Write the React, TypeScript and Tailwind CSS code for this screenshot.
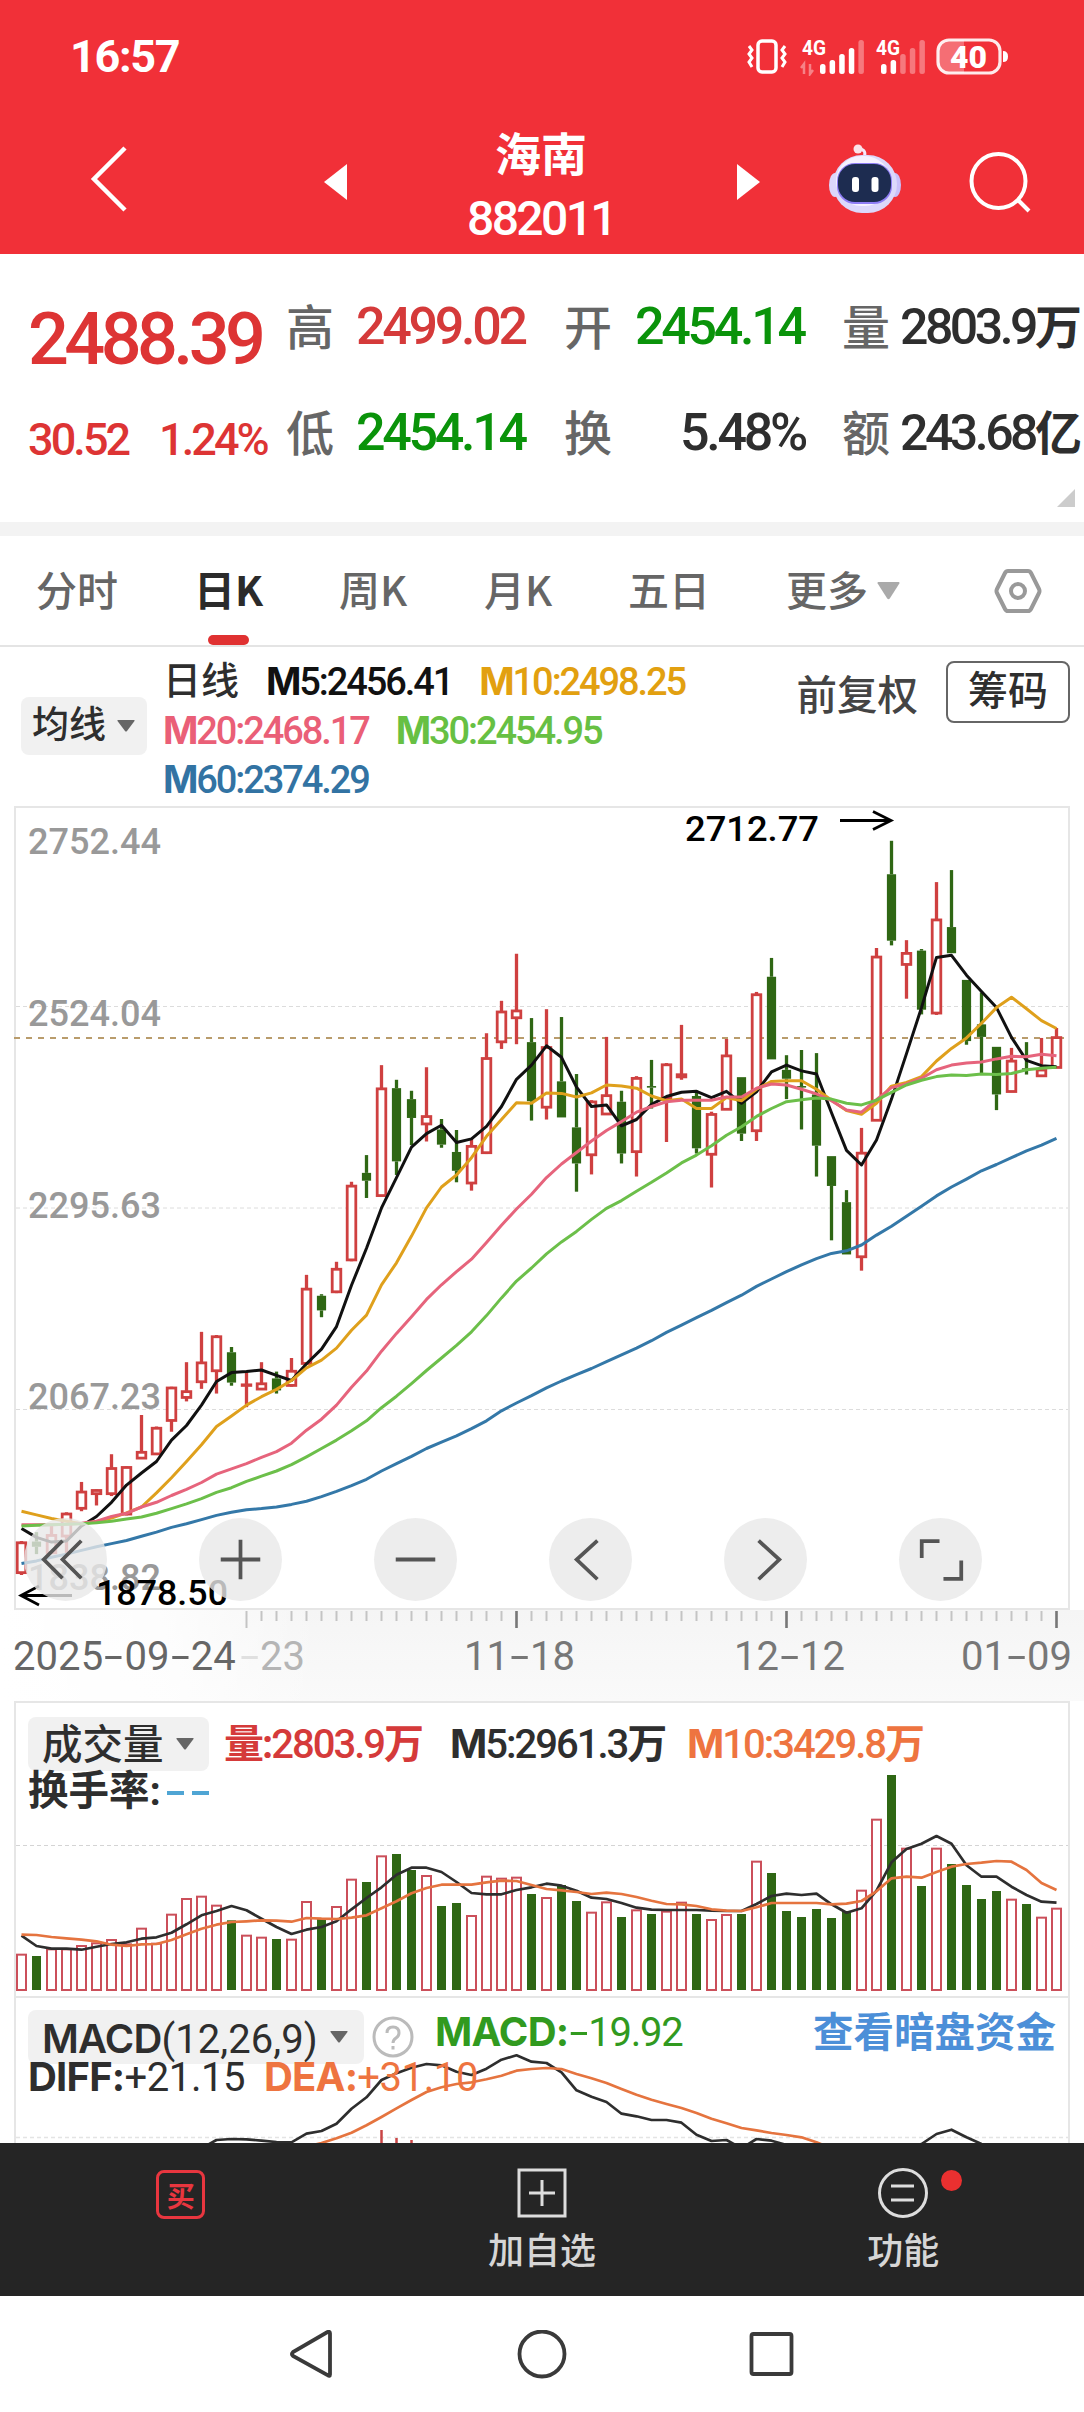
import React from 'react';

type Candle = [string, number, number, number, number];

// Chart rows are stored in a 1568-step grid that covers 820px of height
const UNIT = 820 / 1568;
const PRICE_TOP = 806;
const STEP = 15;
const FIRST_X = 21.5;

const cx = (i: number) => FIRST_X + i * STEP;
const priceY = (v: number) => 800 + v * UNIT - PRICE_TOP;
const volumeY = (v: number) => v / 3 - 1;
const macdY = (v: number) => v / 3 - 296;

// [direction, high, body top, body bottom, low]
const candles: Candle[] = [
    ['r', 1417, 1419, 1478, 1482], ['g', 1400, 1418, 1428, 1442], ['r', 1385, 1405, 1440, 1440], ['r', 1362, 1364, 1408, 1440],
    ['r', 1304, 1322, 1355, 1360], ['r', 1318, 1319, 1327, 1349], ['r', 1251, 1277, 1327, 1331], ['r', 1274, 1275, 1366, 1368],
    ['r', 1176, 1246, 1259, 1259], ['r', 1198, 1200, 1251, 1251], ['r', 1122, 1123, 1187, 1208], ['r', 1075, 1130, 1143, 1150],
    ['r', 1017, 1075, 1113, 1126], ['r', 1023, 1025, 1092, 1135], ['g', 1046, 1056, 1114, 1120], ['r', 1093, 1117, 1120, 1161],
    ['r', 1075, 1115, 1127, 1127], ['g', 1093, 1106, 1129, 1135], ['r', 1067, 1091, 1120, 1122], ['r', 908, 934, 1078, 1078],
    ['g', 945, 948, 976, 989], ['r', 883, 896, 941, 943], ['r', 730, 737, 880, 882], ['g', 679, 713, 728, 761],
    ['r', 507, 551, 757, 757], ['g', 535, 551, 691, 717], ['g', 556, 572, 608, 660], ['r', 511, 604, 620, 653],
    ['g', 610, 630, 659, 665], ['g', 631, 673, 709, 731], ['r', 648, 661, 733, 747], ['r', 446, 493, 675, 677],
    ['r', 384, 404, 463, 476], ['r', 294, 402, 417, 467], ['g', 417, 463, 576, 613], ['r', 400, 472, 588, 611],
    ['g', 415, 538, 607, 607], ['g', 524, 626, 695, 749], ['r', 574, 576, 679, 716], ['r', 453, 564, 601, 601],
    ['g', 556, 577, 676, 695], ['r', 528, 531, 673, 720], ['g', 497, 547, 550, 590], ['r', 503, 505, 571, 654],
    ['r', 430, 524, 530, 535], ['g', 555, 566, 666, 676], ['r', 596, 600, 678, 741], ['r', 457, 488, 592, 592],
    ['g', 530, 530, 638, 652], ['r', 367, 371, 633, 652], ['g', 302, 338, 496, 496], ['g', 488, 516, 533, 572],
    ['g', 478, 547, 549, 630], ['g', 484, 563, 661, 720], ['g', 681, 681, 738, 842], ['g', 746, 769, 869, 869],
    ['r', 627, 674, 874, 900], ['r', 283, 299, 613, 613], ['g', 78, 142, 269, 278], ['r', 268, 292, 315, 380],
    ['g', 285, 288, 401, 410], ['r', 157, 228, 408, 411], ['g', 134, 243, 293, 293], ['g', 344, 344, 461, 468],
    ['g', 368, 429, 453, 525], ['g', 472, 472, 563, 593], ['r', 474, 498, 558, 558], ['g', 463, 513, 515, 525],
    ['r', 455, 515, 528, 528], ['r', 436, 453, 512, 512],
];

const ma5 = [1393, 1410, 1419, 1417, 1388, 1370, 1343, 1310, 1287, 1265, 1224, 1196, 1157, 1112, 1095, 1093, 1090, 1100, 1110, 1078, 1050, 1007, 928, 857, 780, 722, 664, 638, 622, 655, 648, 624, 586, 534, 507, 470, 492, 549, 586, 583, 623, 611, 582, 567, 559, 557, 569, 557, 580, 558, 520, 507, 518, 524, 598, 670, 698, 650, 572, 485, 397, 301, 297, 335, 366, 397, 454, 498, 508, 510];
const ma10 = [1360, 1367, 1374, 1379, 1384, 1380, 1373, 1363, 1352, 1325, 1296, 1265, 1233, 1198, 1178, 1157, 1141, 1127, 1110, 1086, 1071, 1048, 1014, 985, 927, 885, 834, 780, 740, 717, 684, 643, 611, 579, 580, 560, 561, 568, 560, 545, 547, 551, 566, 575, 572, 590, 590, 569, 575, 553, 538, 537, 537, 553, 574, 594, 601, 580, 547, 540, 529, 499, 475, 455, 427, 397, 377, 399, 422, 437];
const ma20 = [1386, 1386, 1386, 1385, 1383, 1379, 1370, 1364, 1352, 1343, 1330, 1318, 1305, 1289, 1279, 1269, 1257, 1246, 1230, 1205, 1184, 1157, 1123, 1092, 1054, 1020, 988, 955, 927, 902, 878, 846, 813, 782, 754, 722, 696, 674, 652, 632, 615, 597, 586, 577, 574, 574, 574, 568, 568, 551, 543, 545, 553, 562, 575, 593, 597, 573, 550, 543, 532, 516, 507, 503, 501, 495, 490, 491, 486, 489];
const ma30 = [1388, 1387, 1386, 1385, 1384, 1382, 1379, 1375, 1371, 1364, 1355, 1346, 1336, 1324, 1315, 1303, 1293, 1283, 1271, 1256, 1240, 1224, 1206, 1187, 1162, 1140, 1116, 1091, 1067, 1043, 1017, 986, 952, 920, 895, 868, 845, 825, 802, 781, 766, 748, 731, 713, 694, 679, 661, 641, 625, 605, 590, 577, 573, 570, 572, 580, 583, 574, 559, 545, 536, 529, 526, 527, 524, 525, 523, 516, 513, 511];
const ma60 = [1460, 1455, 1448, 1442, 1435, 1428, 1422, 1416, 1408, 1400, 1391, 1384, 1376, 1368, 1362, 1357, 1355, 1352, 1347, 1341, 1332, 1322, 1311, 1299, 1283, 1269, 1255, 1240, 1228, 1216, 1202, 1187, 1168, 1153, 1139, 1124, 1111, 1099, 1087, 1074, 1061, 1048, 1034, 1018, 1004, 990, 976, 961, 947, 930, 916, 902, 889, 877, 867, 862, 851, 832, 815, 796, 777, 757, 740, 725, 709, 697, 684, 671, 660, 647];

const volumes = [761, 768, 745, 745, 735, 727, 717, 730, 683, 728, 641, 594, 587, 614, 661, 704, 710, 717, 716, 603, 655, 618, 536, 546, 466, 462, 510, 525, 618, 609, 645, 527, 533, 530, 582, 591, 555, 603, 635, 604, 651, 628, 642, 632, 605, 642, 657, 642, 642, 482, 519, 633, 651, 627, 654, 633, 569, 356, 225, 443, 558, 443, 492, 555, 597, 573, 596, 612, 650, 623];
const volDirections = 'rgrrrrrrrrrrrrgrrgrrgrrgrggrggrrrrgrggrrgrgrrgrrgrggggggrrgrgrggggrgrr';
const volMa5 = [707, 738, 746, 746, 749, 740, 732, 727, 716, 712, 698, 673, 646, 633, 618, 631, 656, 681, 702, 689, 681, 664, 628, 594, 562, 524, 503, 503, 516, 546, 579, 583, 583, 570, 562, 551, 557, 572, 593, 597, 609, 623, 629, 630, 630, 630, 632, 633, 633, 612, 588, 581, 585, 581, 613, 638, 625, 572, 487, 447, 431, 408, 431, 496, 530, 530, 560, 585, 605, 608];
const volMa10 = [704, 705, 711, 715, 719, 724, 734, 738, 733, 732, 720, 703, 686, 674, 666, 664, 661, 662, 665, 654, 656, 657, 653, 646, 625, 604, 580, 564, 554, 554, 554, 547, 542, 543, 555, 567, 571, 576, 582, 578, 582, 591, 602, 612, 613, 618, 628, 632, 633, 622, 609, 609, 609, 609, 613, 611, 603, 574, 535, 530, 533, 516, 500, 492, 488, 483, 485, 510, 549, 570];

const diff = [1345, 1320, 1317, 1318, 1322, 1326, 1327, 1301, 1293, 1271, 1226, 1192, 1140, 1120, 1103, 1092, 1096, 1115, 1125, 1106, 1079, 1066, 1085, 1089, 1117, 1171, 1190, 1206, 1241, 1249, 1260, 1260, 1268, 1304, 1323, 1320, 1345, 1317, 1322, 1335, 1360, 1370, 1370, 1370, 1370, 1370, 1365, 1350, 1332, 1302, 1289, 1312, 1332, 1350];
const dea = [1340, 1329, 1315, 1298, 1276, 1251, 1225, 1200, 1176, 1162, 1152, 1147, 1138, 1127, 1112, 1107, 1104, 1107, 1122, 1135, 1149, 1167, 1184, 1199, 1212, 1224, 1239, 1256, 1270, 1284, 1291, 1299, 1305, 1312, 1327, 1345];

const toPoints = (values: number[], y: (v: number) => number, start = 0) =>
    values.map((v, i) => `${cx(i + start)},${y(v).toFixed(1)}`).join(' ');

const Line: React.FC<{ points: string; color: string; width?: number }> = ({ points, color, width = 3 }) => (
    <polyline points={points} fill="none" stroke={color} strokeWidth={width} strokeLinejoin="round" />
);

const Caret: React.FC<{ className?: string }> = ({ className }) => (
    <svg viewBox="0 0 18 12" preserveAspectRatio="none" className={className ?? 'w-[18px] h-3'}>
        <path d="M1 0h16q1 0 .5 1L10 11q-1 1-2 0L.5 1Q0 0 1 0z" fill="currentColor" />
    </svg>
);

const Dash = () => <span className="mx-[5px] inline-block scale-x-[1.7]">-</span>;

const SignalBars: React.FC<{ active: number; arrows?: boolean }> = ({ active, arrows }) => (
    <svg width="66" height="40" viewBox="0 -4 66 40" fill="#fff">
        <text x="2" y="15" fontSize="21" fontWeight="700" fontFamily="Roboto, sans-serif" textLength="24" lengthAdjust="spacingAndGlyphs">4G</text>
        {arrows && <path d="M4 34V24l-3 4M10 24v10l3-4" fill="none" stroke="#fff" strokeOpacity=".4" strokeWidth="2.5" />}
        {[24, 20, 14, 8, 0].map((top, i) => (
            <rect key={i} x={(arrows ? 20 : 7) + i * 9.6} y={top} width="5.500" height={34 - top} rx="2.5" opacity={i < active ? 1 : 0.35} />
        ))}
    </svg>
);

const StatusBar = () => (
    <div className="flex h-[112px] items-start justify-between pl-[70px] pr-[74px] pt-[35px]">
        <span className="font-['Roboto'] text-[45px] font-bold leading-[44px] tracking-[-0.03em]">16:57</span>
        <div className="flex items-center pt-[1px]">
            <svg width="42" height="36" viewBox="0 0 42 36" fill="none" stroke="#fff" strokeWidth="3.500">
                <rect x="12" y="3" width="18" height="31" rx="4" />
                <path d="M3 8l3 4-3 4 3 4-3 4 3 5M39 8l-3 4 3 4-3 4 3 4-3 5" strokeWidth="3" />
            </svg>
            <div className="ml-3"><SignalBars active={4} arrows /></div>
            <div className="ml-2"><SignalBars active={2} /></div>
            <svg className="-ml-1" width="74" height="37" viewBox="0 0 74 37">
                <path d="M12 2h16v33H12Q2 35 2 25V12Q2 2 12 2z" fill="#fff" fillOpacity=".3" />
                <rect x="2" y="2" width="62" height="33" rx="11" fill="none" stroke="#fff" strokeOpacity=".9" strokeWidth="3.200" />
                <path d="M67 13q5 0 5 5.500t-5 5.500z" fill="#fff" />
                <text x="14" y="29.500" fontSize="31" fontWeight="900" fontFamily="Roboto, sans-serif" fill="#fff" textLength="37" lengthAdjust="spacingAndGlyphs">40</text>
            </svg>
        </div>
    </div>
);

const Robot = () => (
    <svg width="76" height="72" viewBox="0 0 76 72">
        <path d="M37 15q3-8-4-9" fill="none" stroke="#f5e9fb" strokeWidth="3" />
        <circle cx="31" cy="6" r="4.500" fill="#fbe3ea" />
        <ellipse cx="8" cy="42" rx="6" ry="12" fill="#dcd6fb" />
        <ellipse cx="68" cy="42" rx="6" ry="12" fill="#c9c0fa" />
        <rect x="6" y="12" width="64" height="58" rx="29" fill="#dcd8fb" />
        <rect x="9" y="13" width="54" height="50" rx="25" fill="#f6f2ff" />
        <rect x="10" y="20" width="55" height="41" rx="18" fill="#8e7df5" />
        <rect x="11" y="21" width="53" height="38" rx="17" fill="#1d2c50" />
        <rect x="25" y="34" width="7" height="15" rx="3" fill="#fff" />
        <rect x="44.500" y="34" width="7" height="15" rx="3" fill="#fff" />
    </svg>
);

const Header = () => (
    <header className="h-[254px] bg-[#f13038] text-white">
        <StatusBar />
        <div className="flex items-start">
            <svg className="ml-[88px] mt-[32px]" width="44" height="72" viewBox="0 0 44 72">
                <path d="M37 4L6 35l31 31" fill="none" stroke="#fff" strokeWidth="4.500" />
            </svg>
            <svg className="ml-[191px] mt-[51px]" width="25" height="38" viewBox="0 0 25 38"><path d="M24 1v36L1 19z" fill="#fff" /></svg>
            <div className="w-[386px] text-center">
                <h1 className="mt-[16px] font-['Noto_Sans_CJK_SC'] text-[46px] font-bold leading-[46px]">海南</h1>
                <div className="mt-[22px] font-['Roboto'] text-[48px] font-medium leading-[46px] tracking-[-0.055em]">882011</div>
            </div>
            <svg className="ml-[2px] mt-[51px]" width="25" height="38" viewBox="0 0 25 38"><path d="M1 1v36l23-18z" fill="#fff" /></svg>
            <div className="ml-[66px] mt-[31px]"><Robot /></div>
            <svg className="ml-[64px] mt-[36px]" width="64" height="66" viewBox="0 0 64 66" fill="none" stroke="#fff" strokeWidth="4">
                <circle cx="31.500" cy="33" r="27" />
                <path d="M51 52l11 11" />
            </svg>
        </div>
    </header>
);

const StatLabel: React.FC<{ children: string }> = ({ children }) => (
    <span className="-mt-[3px] -ml-[1px] font-['Noto_Sans_CJK_SC'] text-[48px] font-medium leading-[54px] tracking-normal text-[#666]">{children}</span>
);

const Quote = () => (
    <section className="relative h-[268px] bg-white font-['Roboto','Noto_Sans_CJK_SC']">
        <div className="flex pt-[46px]">
            <div className="w-[287px] shrink-0 pl-7 text-[#dd3434]">
                <div className="mt-1 text-[72px] font-medium leading-[72px] tracking-[-0.064em]">2488.39</div>
                <div className="mt-[37px] flex text-[45px] font-medium leading-[54px] tracking-[-0.065em]">
                    <span className="w-[131px]">30.52</span>
                    <span>1.24%</span>
                </div>
            </div>
            <div className="grid grid-cols-[69px_170px_39px_70px_170px_38px_57px_200px] content-start gap-y-[51px] whitespace-nowrap text-[52px] font-medium leading-[54px] tracking-[-0.063em]">
                <StatLabel>高</StatLabel>
                <span className="text-[#d53a3a]">2499.02</span>
                <span />
                <StatLabel>开</StatLabel>
                <span className="text-[#0a930a]">2454.14</span>
                <span />
                <StatLabel>量</StatLabel>
                <span className="text-[50px] tracking-[-0.07em] text-[#2e2e2e]">2803.9<b className="text-[47px] font-bold">万</b></span>
                <StatLabel>低</StatLabel>
                <span className="text-[#0a930a]">2454.14</span>
                <span />
                <StatLabel>换</StatLabel>
                <span className="text-right text-[#2e2e2e]">5.48%</span>
                <span />
                <StatLabel>额</StatLabel>
                <span className="text-[50px] tracking-[-0.07em] text-[#2e2e2e]">243.68<b className="text-[47px] font-bold">亿</b></span>
            </div>
        </div>
        <svg className="absolute bottom-[15px] right-[9px]" width="18" height="18" viewBox="0 0 18 18"><path d="M18 0v18H0z" fill="#ccc" /></svg>
    </section>
);

const Tabs = () => (
    <nav className="flex h-[111px] items-center border-b-2 border-[#e4e4e4] bg-white pl-[36px] font-['Noto_Sans_CJK_SC'] text-[41px] font-medium text-[#666]">
        <span className="-mt-[3px] w-[158px]">分时</span>
        <span className="relative flex h-full w-[145px] items-center pb-[3px] font-bold text-[#2b2b2b]">
            日K
            <span className="absolute bottom-0 left-[14px] h-[10px] w-[41px] rounded-md bg-[#e03131]" />
        </span>
        <span className="-mt-[3px] w-[145px]">周K</span>
        <span className="-mt-[3px] w-[144px]">月K</span>
        <span className="-mt-[3px] w-[158px]">五日</span>
        <span className="-mt-[3px]">更多</span>
        <Caret className="ml-[9px] h-[18px] w-[23px] text-[#aaa]" />
        <svg className="ml-auto mr-[42px]" width="48" height="46" viewBox="0 0 48 46" fill="none" stroke="#999" strokeWidth="4">
            <path d="M14 3h20q2 0 3 2l8 16q1 2 0 4l-8 16q-1 2-3 2H14q-2 0-3-2L3 25q-1-2 0-4L11 5q1-2 3-2z" />
            <circle cx="24" cy="23" r="7" />
        </svg>
    </nav>
);

const MaValue: React.FC<{ name: string; value: string; className: string }> = ({ name, value, className }) => (
    <span className={className}><b className="font-['Inter'] font-bold">M</b>{name}:{value}</span>
);

const MaLegend = () => (
    <section className="flex h-[159px] bg-white font-['Roboto','Noto_Sans_CJK_SC']">
        <div className="ml-[21px] mt-[50px] flex h-[58px] w-[126px] items-center justify-between rounded-lg bg-[#f1f1f1] pl-[11px] pr-3 text-[#2e2e2e]">
            <span className="text-[37px] font-medium">均线</span>
            <Caret className="h-3 w-[18px] text-[#666]" />
        </div>
        <div className="ml-[16px] mt-[10px] w-[600px] text-[38px] font-medium leading-[48px] tracking-[-0.055em]">
            <div className="flex gap-[27px]">
                <span className="font-medium tracking-normal text-[#2e2e2e]">日线</span>
                <MaValue name="5" value="2456.41" className="text-[#111]" />
                <MaValue name="10" value="2498.25" className="text-[#e2a010]" />
            </div>
            <div className="flex gap-[27px]">
                <MaValue name="20" value="2468.17" className="text-[#ea5f77]" />
                <MaValue name="30" value="2454.95" className="text-[#67c043]" />
            </div>
            <MaValue name="60" value="2374.29" className="text-[#3273a3]" />
        </div>
        <span className="ml-auto mr-7 mt-[19px] text-[40.5px] font-medium leading-[60px] text-[#444]">前复权</span>
        <span className="mr-[14px] mt-[14px] flex h-[62px] w-[124px] items-center justify-center rounded-lg border-2 border-[#666] text-[40px] font-medium text-[#2e2e2e]">筹码</span>
    </section>
);

const axisLabels = [
    { text: '2752.44', y: 47.5 },
    { text: '2524.04', y: 220 },
    { text: '2295.63', y: 412 },
    { text: '2067.23', y: 603 },
    { text: '1838.82', y: 784 },
];

const buttonIcons = [
    'M39 23L20 42l19 19M58 23L39 42l19 19',
    'M22 42h40M42 22v40',
    'M22 42h40',
    'M49 23L28 42l21 20',
    'M35 23l21 19-21 20',
    'M41 23.500H23v17M63 43v18.500H45',
];

const PriceChart = () => (
    <section className="relative h-[804px] bg-white">
        <svg width="1084" height="804" viewBox="0 0 1084 804" className="block">
            <rect x="15" y="1" width="1054" height="802" fill="none" stroke="#e6e6e6" strokeWidth="2" />
            {[200.5, 402, 603.5].map((y) => (
                <line key={y} x1="16" x2="1068" y1={y} y2={y} stroke="#dcdcdc" strokeWidth="1" strokeDasharray="4 3" />
            ))}
            <line x1="14" x2="1068" y1="232" y2="232" stroke="#b99c6c" strokeWidth="1.800" strokeDasharray="6 6" />
            {axisLabels.map((l) => (
                <text key={l.text} x="28" y={l.y} fontSize="37" fontWeight="500" fontFamily="Roboto, sans-serif" fill="#999" textLength="133" lengthAdjust="spacingAndGlyphs">{l.text}</text>
            ))}
            {candles.map(([dir, high, top, bottom, low], i) => {
                const red = dir === 'r';
                const y = priceY(top);
                const h = Math.max(priceY(bottom) - y, 1.5);
                return (
                    <g key={i} stroke={red ? '#cf4040' : '#2f6714'} strokeWidth="3.300">
                        <line x1={cx(i)} x2={cx(i)} y1={priceY(high)} y2={y} />
                        <line x1={cx(i)} x2={cx(i)} y1={y + h} y2={priceY(low)} />
                        {red
                            ? <rect x={cx(i) - 4.3} y={y + 0.7} width="8.600" height={Math.max(h - 1, 0.5)} fill="#fff" strokeWidth="2.800" />
                            : <rect x={cx(i) - 4.6} y={y} width="9.200" height={h} fill="#2f6714" stroke="none" />}
                    </g>
                );
            })}
            <Line points={toPoints(ma60, priceY)} color="#3478a8" />
            <Line points={toPoints(ma5, priceY)} color="#111" />
            <Line points={toPoints(ma10, priceY)} color="#dfa01c" />
            <Line points={toPoints(ma20, priceY)} color="#e6647c" />
            <Line points={toPoints(ma30, priceY)} color="#6cbf4a" />
            <g fill="none" stroke="#000" strokeWidth="2.800">
                <path d="M840 14.500h51M873 5.500l18 9-18 9" />
                <path d="M72 789.500H21M39 780l-18 9.500 18 9.500" />
            </g>
            <g fontSize="35.500" fontWeight="500" fontFamily="Roboto, sans-serif" fill="#000">
                <text x="685" y="35" textLength="134" lengthAdjust="spacingAndGlyphs">2712.77</text>
                <text x="96" y="799" textLength="132" lengthAdjust="spacingAndGlyphs">1878.50</text>
            </g>
        </svg>
        <div className="absolute bottom-[9px] left-[24px] flex gap-[92px]">
            {buttonIcons.map((d) => (
                <button key={d} className="h-[83px] w-[83px] rounded-full bg-[#e8e8e8]/80">
                    <svg width="83" height="83" viewBox="0 0 84 84" fill="none" stroke="#555" strokeWidth="3.800"><path d={d} /></svg>
                </button>
            ))}
        </div>
    </section>
);

const TimeAxis = () => (
    <div className="relative h-[91px] bg-gradient-to-b from-[#f5f5f5] to-[#fafafa] font-['Roboto'] text-[40px] text-[#777]">
        <div className="absolute left-0 top-0 h-full w-[320px] bg-gradient-to-r from-white via-white/80 to-transparent" />
        <svg className="relative block" width="1084" height="20" viewBox="0 0 1084 20">
            {candles.map((_, i) => i >= 15 && (
                <line key={i} x1={cx(i)} x2={cx(i)} y1="1" y2={(i - 15) % 18 === 0 ? 18 : 11} stroke={i > 15 && (i - 15) % 18 === 0 ? '#777' : '#c4c4c4'} strokeWidth={i > 15 && (i - 15) % 18 === 0 ? 2.6 : 2} />
            ))}
        </svg>
        <div className="relative flex items-center whitespace-nowrap pl-[13px] pt-[4px] leading-[46px]">
            <span className="w-[226px] tracking-[0.002em] text-[#666]">2025<Dash />09<Dash />24</span>
            <span className="w-[225px] text-[#b5b5b5]"><span className="text-[#e0e0e0]"><Dash /></span>23</span>
            <span className="w-[270px]">11<Dash />18</span>
            <span className="w-[227px]">12<Dash />12</span>
            <span>01<Dash />09</span>
        </div>
    </div>
);

const VolumeChart = () => (
    <section className="relative h-[295px] bg-white font-['Roboto','Noto_Sans_CJK_SC']">
        <svg width="1084" height="295" viewBox="0 0 1084 295" className="block">
            <rect x="15" y="1" width="1054" height="300" fill="none" stroke="#e6e6e6" strokeWidth="2" />
            <line x1="16" x2="1068" y1="144.500" y2="144.500" stroke="#d4d4d4" strokeWidth="1" strokeDasharray="4 3" />
            {volumes.map((v, i) => volDirections[i] === 'r'
                ? <rect key={i} x={cx(i) - 4.5} y={volumeY(v) + 1} width="9" height={288 - volumeY(v)} fill="#fff" stroke="#cb4f5a" strokeWidth="2" />
                : <rect key={i} x={cx(i) - 4.5} y={volumeY(v)} width="9" height={289 - volumeY(v)} fill="#2f6714" />)}
            <Line points={toPoints(volMa5, volumeY)} color="#2e2e2e" width={2.7} />
            <Line points={toPoints(volMa10, volumeY)} color="#e5743f" width={2.7} />
        </svg>
        <div className="absolute left-[28px] top-[14px]">
            <div className="flex items-center whitespace-nowrap text-[40px] leading-[54px] font-medium tracking-[-0.05em]">
                <div className="flex h-[54px] w-[181px] items-center gap-3 rounded-lg bg-[#f1f1f1] pl-[14px] text-[#2e2e2e]">
                    <span className="pt-[2px] text-[40.5px] font-medium tracking-normal">成交量</span>
                    <Caret className="h-3 w-[18px] text-[#666]" />
                </div>
                <span className="ml-[15px] w-[226px] pt-[2px] text-[#d53a3a]"><b className="font-bold">量:</b>2803.9<b className="font-bold">万</b></span>
                <span className="w-[237px] pt-[2px] text-[#2e2e2e]"><b className="font-['Inter'] font-bold">M</b>5:2961.3<b className="font-bold">万</b></span>
                <span className="pt-[2px] text-[#ee7440]"><b className="font-['Inter'] font-bold">M</b>10:3429.8<b className="font-bold">万</b></span>
            </div>
            <div className="flex items-center pt-[1px] text-[40.5px] font-bold leading-[36px] text-[#2e2e2e]">
                换手率:
                <span className="ml-[6px] mt-1 h-[4px] w-[17px] bg-[#4fa5d4]" />
                <span className="ml-[8px] mt-1 h-[4px] w-[17px] bg-[#4fa5d4]" />
            </div>
        </div>
    </section>
);

const MacdChart = () => (
    <section className="relative h-[147px] overflow-hidden bg-white font-['Roboto','Noto_Sans_CJK_SC']">
        <div className="absolute left-[28px] top-[14px] h-[54px] w-[336px] rounded-lg bg-[#f1f1f1]" />
        <svg width="1084" height="147" viewBox="0 0 1084 147" className="relative block">
            <rect x="15" y="1" width="1054" height="200" fill="none" stroke="#e6e6e6" strokeWidth="2" />
            <line x1="16" x2="1068" y1="141.500" y2="141.500" stroke="#e4e4e4" strokeWidth="1.500" strokeDasharray="4 3" />
            <path d={`M${cx(24)} 134v20M${cx(25)} 142v20M${cx(26)} 144v20`} stroke="#c94444" strokeWidth="2.500" />
            <Line points={toPoints(diff, macdY, 12)} color="#2e2e2e" width={2.7} />
            <Line points={toPoints(dea, macdY, 19)} color="#e5743f" width={2.7} />
        </svg>
        <div className="absolute inset-x-0 top-[14px] flex whitespace-nowrap pl-[42px] pr-[28px] text-[40px] leading-[54px] text-[#2e2e2e]">
            <span className="w-[288px] pt-[2px] tracking-[0.001em]"><b className="font-['Inter'] font-semibold tracking-[-0.02em]">MACD</b>(12,26,9)</span>
            <Caret className="mt-[21px] h-3 w-[18px] text-[#666]" />
            <svg className="ml-[24px] mt-[6px]" width="42" height="42" viewBox="0 0 42 42" fill="none" stroke="#bbb" strokeWidth="3">
                <circle cx="21" cy="21" r="19" />
                <path d="M15 17q0-6 6-6t6 6q0 3-3 5t-3 5M21 30v3.500" />
            </svg>
            <span className="ml-[21px] -mt-[5px] tracking-[-0.03em] text-[#319a1f]"><b className="font-['Inter'] font-bold tracking-[-0.02em]">MACD:</b><Dash />19.92</span>
            <a className="ml-auto -mt-[4px] text-[40.5px] font-bold text-[#4c8fd8]">查看暗盘资金</a>
        </div>
        <div className="absolute left-[28px] top-[59px] flex whitespace-nowrap text-[40px] leading-[44px] tracking-[-0.01em]">
            <span className="w-[236px] text-[#2e2e2e]"><b className="font-['Inter'] font-bold tracking-[-0.02em]">DIFF:</b>+21.15</span>
            <span className="text-[#ee7440]"><b className="font-['Inter'] font-bold tracking-[-0.02em]">DEA:</b>+31.10</span>
        </div>
    </section>
);

const BottomBar = () => (
    <footer className="grid h-[153px] grid-cols-3 bg-[#252525] pt-[25px] font-['Noto_Sans_CJK_SC'] text-[36px] font-medium leading-[40px] text-[#d6d6d6]">
        <div className="flex flex-col items-center">
            <span className="mt-[2px] flex h-[49px] w-[49px] items-center justify-center rounded-lg border-[3px] border-[#e8363f] text-[28px] font-bold text-[#e8363f]">买</span>
        </div>
        <div className="flex flex-col items-center gap-[10px]">
            <svg width="50" height="50" viewBox="0 0 50 50" fill="none" stroke="#ddd" strokeWidth="3">
                <rect x="2" y="2" width="46" height="46" />
                <path d="M12 25h26M25 12v26" />
            </svg>
            <span>加自选</span>
        </div>
        <div className="relative flex flex-col items-center gap-[10px]">
            <svg width="50" height="50" viewBox="0 0 50 50" fill="none" stroke="#ddd" strokeWidth="3">
                <circle cx="25" cy="25" r="23.500" />
                <path d="M13 18h23M13 32h23" />
            </svg>
            <span>功能</span>
            <span className="absolute left-[218px] top-[2px] h-[21px] w-[21px] rounded-full bg-[#ea3030]" />
        </div>
    </footer>
);

const SystemNav = () => (
    <div className="flex h-[116px] justify-center bg-white pt-[34px]">
        <svg width="508" height="50" viewBox="0 0 508 50" fill="none" stroke="#3a3a3a" strokeWidth="3.800">
            <path d="M42 3.500v41q0 2.500-2.500.500L5 26q-2-2 0-4L39.500 2q2.500-1 2.500 1.500z" />
            <circle cx="254" cy="24" r="22.500" />
            <rect x="463.500" y="4" width="40" height="40" rx="2" />
        </svg>
    </div>
);

const App: React.FC = () => {
    return (
        <div className="w-[1084px] overflow-hidden bg-white">
            <Header />
            <Quote />
            <div className="h-[14px] bg-[#f3f3f3]" />
            <Tabs />
            <MaLegend />
            <PriceChart />
            <TimeAxis />
            <VolumeChart />
            <MacdChart />
            <BottomBar />
            <SystemNav />
        </div>
    );
};

export default App;
